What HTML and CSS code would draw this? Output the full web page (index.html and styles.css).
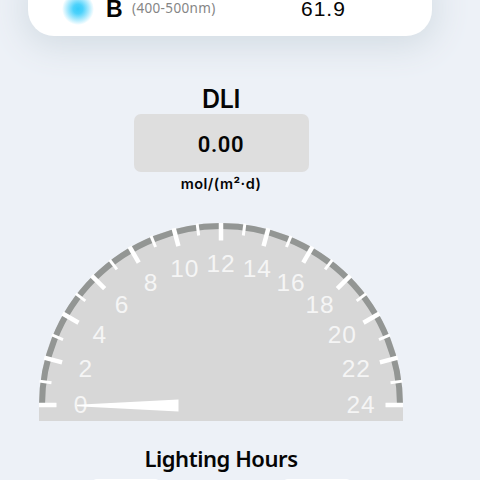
FILE: index.html
```
<!DOCTYPE html>
<html lang="en">
<head>
<meta charset="utf-8">
<title>DLI</title>
<link rel="stylesheet" href="styles.css">
</head>
<body>
<main class="screen">
  <section class="card">
    <span class="glow"></span>
    <span class="band">B</span>
    <span class="range">(400-500nm)</span>
    <span class="value">61.9</span>
  </section>
  <section class="dli">
    <h2 class="title">DLI</h2>
    <div class="reading">0.00</div>
    <div class="unit">mol/(m²·d)</div>
  </section>
  <svg class="gauge" id="gauge" viewBox="39 223 364 198">
    <path d="M39 421V405A182 182 0 0 1 403 405V421Z" fill="#d7d7d7"/>
    <path d="M42 405A179 179 0 0 1 400 405" fill="none" stroke="#939694" stroke-width="6"/>
    <g id="ticks" stroke="#fff"></g>
    <g id="labels" class="labels"></g>
    <path d="M77 404.7L178.500 399.500V411.500L77 406.300Z" fill="#fff"/>
  </svg>
  <h2 class="hours">Lighting Hours</h2>
  <div class="inputs"><span class="box"></span><span class="box"></span></div>
</main>
<script src="gauge.js"></script>
</body>
</html>
```
FILE: styles.css
```
* { box-sizing: border-box; }
body {
  margin: 0;
  background: #edf1f7;
  color: #050505;
  font-family: Inter, sans-serif;
}
.screen {
  width: 480px;
  height: 480px;
  overflow: hidden;
  display: flex;
  flex-direction: column;
  align-items: center;
}
.card {
  flex: none;
  width: 404px;
  height: 56px;
  margin: -20px 0 0 -20px;
  padding: 14px 0 13px 35px;
  display: flex;
  align-items: center;
  border-radius: 0 0 26px 26px;
  background: #fff;
  box-shadow: 0 6px 34px 4px #d3dce3;
}
.glow {
  width: 32px;
  height: 32px;
  margin-left: -1px;
  border-radius: 50%;
  background: radial-gradient(circle closest-side, #35ccfa 0%, #4dd2fb 30%, #a5e8fd 65%, #fff 100%);
}
.band {
  width: 18px;
  margin-left: 12px;
  font: 700 23px/30px "Liberation Sans", sans-serif;
}
.range {
  width: 90px;
  margin: -2px 0 0 8px;
  color: #858585;
  font: 400 13.5px/28px "Noto Sans", sans-serif;
  letter-spacing: .35px;
  white-space: nowrap;
}
.value {
  margin-left: 79px;
  font: 400 21px/30px "Liberation Sans", sans-serif;
  letter-spacing: 1px;
}
.dli {
  width: 175px;
  margin: 48px 0 0 -38px;
  display: flex;
  flex-direction: column;
  align-items: center;
}
.title {
  margin: 0;
  font-size: 25px;
  font-weight: 600;
  line-height: 30px;
  letter-spacing: -.3px;
}
.reading {
  width: 175px;
  height: 58px;
  border-radius: 7px;
  background: #dedede;
  font: 600 22px/62px Roboto, sans-serif;
  letter-spacing: .6px;
  text-align: center;
}
.unit {
  font: 600 14.5px/24px Inter, sans-serif;
  letter-spacing: .5px;
}
.gauge {
  flex: none;
  width: 364px;
  height: 198px;
  margin: 27px 0 0 -38px;
}
.labels {
  fill: #f5f5f5;
  font: 400 24.5px "Liberation Sans", sans-serif;
  text-anchor: middle;
  letter-spacing: .8px;
}
.hours {
  margin: 22px 0 0 -38px;
  font: 600 22px/30px "Noto Sans", sans-serif;
  letter-spacing: -.45px;
}
.inputs {
  display: flex;
  gap: 121px;
  margin: 6px 0 0 -38px;
}
.box {
  width: 70px;
  height: 30px;
  border-radius: 6px;
  background: #fff;
}
```
FILE: gauge.js
```
const cx = 221, cy = 405, radius = 182;
const ns = "http://www.w3.org/2000/svg";
const ticks = document.getElementById("ticks");
const labels = document.getElementById("labels");

for (let hour = 0; hour <= 24; hour++) {
  const major = hour % 2 === 0;
  const angle = Math.PI * (1 - hour / 24);
  const x = Math.cos(angle), y = -Math.sin(angle);
  const inner = radius - (major ? 17.5 : 11);
  const line = document.createElementNS(ns, "line");
  line.setAttribute("x1", cx + x * (radius + 1));
  line.setAttribute("y1", cy + y * (radius + 1));
  line.setAttribute("x2", cx + x * inner);
  line.setAttribute("y2", cy + y * inner);
  line.setAttribute("stroke-width", major ? 4.5 : 3);
  ticks.appendChild(line);
  if (major) {
    const text = document.createElementNS(ns, "text");
    text.setAttribute("x", cx + x * 140);
    text.setAttribute("y", cy + y * 141 + 8);
    text.textContent = hour;
    labels.appendChild(text);
  }
}
```
